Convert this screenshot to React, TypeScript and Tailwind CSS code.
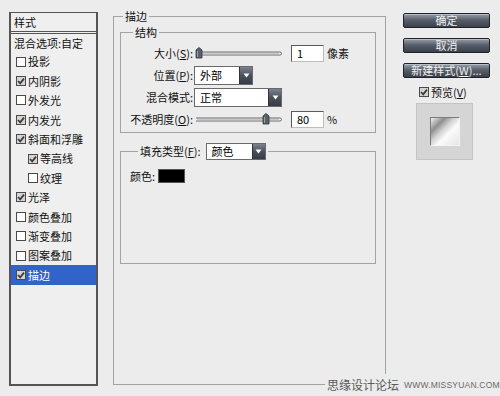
import React from 'react';

const cjk = "font-['Noto_Sans_CJK_SC','Liberation_Sans',sans-serif]";

function CheckBox({ checked }: { checked: boolean }) {
  return (
    <svg width="10" height="10" viewBox="0 0 10 10" className="shrink-0">
      <rect x="0.5" y="0.5" width="9" height="9" fill={checked ? '#d4d4d4' : '#fff'} stroke="#4a4a4a" />
      {checked && <path d="M2 5 L4.2 7.4 L8 2.6" fill="none" stroke="#3a3a3a" strokeWidth="1.7" />}
    </svg>
  );
}

function StyleRow({ label, checked, indent, selected }: { label: string; checked: boolean; indent?: boolean; selected?: boolean }) {
  return (
    <div
      className={`flex h-[19.4px] items-center gap-[2px] ${indent ? 'pl-[17px]' : 'pl-[5px]'} ${
        selected ? 'bg-[#3163c8] text-white' : 'text-[#111]'
      }`}
    >
      <CheckBox checked={checked} />
      <span>{label}</span>
    </div>
  );
}

function Slider({ thumb }: { thumb: number }) {
  return (
    <svg width="88" height="12" viewBox="0 0 88 12" className="shrink-0">
      <path d="M1 5 H85 A1.5 1.5 0 0 1 85 8 H1" fill="#f8f8f8" stroke="#6a6a6a" strokeWidth="1" />
      <line x1="2" y1="6" x2="84" y2="6" stroke="#9a9a9a" strokeWidth="1" />
      <path
        d={`M${thumb} 3 L${thumb + 3} 0.5 L${thumb + 6} 3 L${thumb + 6} 11 L${thumb} 11 Z`}
        fill="#5b616a"
        stroke="#2e3238"
        strokeWidth="0.8"
      />
      <line x1={thumb + 1.5} y1="4" x2={thumb + 1.5} y2="10" stroke="#9aa0a8" strokeWidth="1" />
    </svg>
  );
}

function NumInput({ value }: { value: string }) {
  return (
    <div className="flex h-[17px] w-[33px] shrink-0 items-center border border-[#5a5a5a] border-b-[#bdbdbd] border-r-[#bdbdbd] bg-white pl-[5px] text-[11px] text-black">
      {value}
    </div>
  );
}

function Select({ value, width, height = 19 }: { value: string; width: number; height?: number }) {
  return (
    <div
      className="flex shrink-0 items-stretch border border-[#6a6a6a] bg-white"
      style={{ width, height }}
    >
      <span className="flex flex-1 items-center pl-[5px] text-[11px] text-black">{value}</span>
      <span className="flex w-[13px] items-center justify-center border-l border-[#333] bg-[linear-gradient(#7c838e,#4a515c_50%,#363c46)]">
        <svg width="7" height="5" viewBox="0 0 7 5">
          <path d="M0.5 0.5 H6.5 L3.5 4.5 Z" fill="#fff" />
        </svg>
      </span>
    </div>
  );
}

function DarkButton({ children }: { children: React.ReactNode }) {
  return (
    <div className="flex h-[15px] w-[87px] items-center justify-center rounded-[2px] border border-[#1f2329] bg-[linear-gradient(#98a0aa,#59606b_45%,#3a404a)] text-[11px] leading-none text-[#f0f0f0] shadow-[inset_0_1px_0_#b8bec6]">
      {children}
    </div>
  );
}

export default function App() {
  const rows: { label: string; checked: boolean; indent?: boolean; selected?: boolean }[] = [
    { label: '投影', checked: false },
    { label: '内阴影', checked: true },
    { label: '外发光', checked: false },
    { label: '内发光', checked: true },
    { label: '斜面和浮雕', checked: true },
    { label: '等高线', checked: true, indent: true },
    { label: '纹理', checked: false, indent: true },
    { label: '光泽', checked: true },
    { label: '颜色叠加', checked: false },
    { label: '渐变叠加', checked: false },
    { label: '图案叠加', checked: false },
    { label: '描边', checked: true, selected: true },
  ];

  return (
    <div className={`relative flex h-[396px] w-[500px] items-start overflow-hidden bg-[#ececec] text-[11px] text-[#111] ${cjk}`}>
      {/* style list */}
      <div className="ml-[9px] mt-[12px] flex h-[374px] w-[89px] shrink-0 flex-col border-2 border-t border-[#555] bg-[#efefef]">
        <div className="flex h-[21px] items-center border-b-[3px] border-double border-[#555] pl-[3px]">样式</div>
        <div className="flex h-[18px] items-center pl-[3px]">混合选项:自定</div>
        {rows.map((r) => (
          <StyleRow key={r.label} {...r} />
        ))}
      </div>

      {/* stroke settings */}
      <fieldset className="ml-[15px] mt-[9px] h-[376px] w-[273px] shrink-0 border border-[#a3a3a3] px-[6px] pt-[2px]">
        <legend className="ml-[3px] px-[2px] leading-[14px]">描边</legend>

        <fieldset className="h-[108px] w-[256px] border border-[#a3a3a3] pt-[4px]">
          <legend className="ml-[12px] px-[2px] leading-[14px]">结构</legend>
          <div className="flex flex-col gap-[2px]">
            <div className="flex h-[20px] items-center">
              <span className="w-[72px] shrink-0 text-right">
                大小(<u>S</u>):
              </span>
              <span className="ml-[2px]">
                <Slider thumb={1} />
              </span>
              <span className="ml-[8px]">
                <NumInput value="1" />
              </span>
              <span className="ml-[3px]">像素</span>
            </div>
            <div className="flex h-[20px] items-center">
              <span className="w-[72px] shrink-0 text-right">
                位置(<u>P</u>):
              </span>
              <span className="ml-[1px]">
                <Select value="外部" width={59} />
              </span>
            </div>
            <div className="flex h-[20px] items-center">
              <span className="w-[72px] shrink-0 text-right">混合模式:</span>
              <span className="ml-[1px]">
                <Select value="正常" width={88} />
              </span>
            </div>
            <div className="flex h-[20px] items-center">
              <span className="w-[72px] shrink-0 text-right">
                不透明度(<u>O</u>):
              </span>
              <span className="ml-[2px]">
                <Slider thumb={68} />
              </span>
              <span className="ml-[8px]">
                <NumInput value="80" />
              </span>
              <span className="ml-[3px]">%</span>
            </div>
          </div>
        </fieldset>

        <fieldset className="mt-[10px] h-[121px] w-[256px] border border-[#a3a3a3] pt-[9px]">
          <legend className="ml-[17px] px-[2px]">
            <span className="flex items-center">
              <span>
                填充类型(<u>F</u>):
              </span>
              <span className="ml-[5px]">
                <Select value="颜色" width={60} height={17} />
              </span>
            </span>
          </legend>
          <div className="flex h-[14px] items-center pl-[9px]">
            <span>颜色:</span>
            <span className="ml-[3px] h-[14px] w-[27px] border border-[#555] bg-black" />
          </div>
        </fieldset>
      </fieldset>

      {/* buttons */}
      <div className="ml-[17px] mt-[13px] flex w-[87px] shrink-0 flex-col">
        <div className="flex flex-col gap-[10px]">
          <DarkButton>确定</DarkButton>
          <DarkButton>取消</DarkButton>
          <DarkButton>
            新建样式(<u>W</u>)...
          </DarkButton>
        </div>
        <div className="ml-[16px] mt-[9px] flex h-[10px] items-center gap-[2px]">
          <CheckBox checked />
          <span>
            预览(<u>V</u>)
          </span>
        </div>
        <div className="ml-[13px] mt-[6px] flex h-[57px] w-[57px] items-center justify-center border border-[#c4c4c4] bg-[#d5d5d5]">
          <div className="h-[29px] w-[30px] border border-[#7c7c7c] border-b-[#f4f4f4] border-r-[#f4f4f4] bg-[linear-gradient(135deg,#f2f2f2_0%,#8e8e8e_25%,#cfcfcf_42%,#fbfbfb_60%,#e6e6e6_100%)]" />
        </div>
      </div>

      {/* watermark */}
      <div className="absolute bottom-0 right-0 flex h-[22px] w-[175px] items-center whitespace-nowrap bg-[#ececec] pl-[2px]">
        <span className="shrink-0 text-[12px] leading-none text-[#5a5a5a]">思缘设计论坛</span>
        <span className="ml-[5px] shrink-0 font-['Liberation_Sans',sans-serif] text-[8.5px] leading-none tracking-[0.2px] text-[#6a6a6a]">
          WWW.MISSYUAN.COM
        </span>
      </div>
    </div>
  );
}
